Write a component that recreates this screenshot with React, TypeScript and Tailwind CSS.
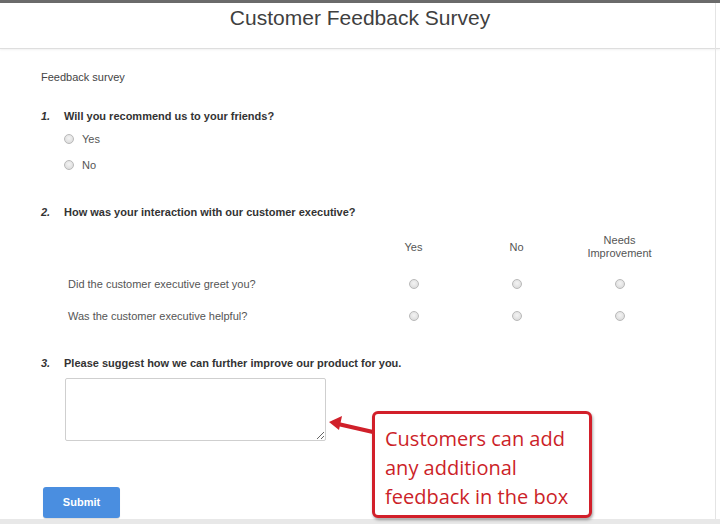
import React from "react";

const Radio = () => (
  <span className="inline-block w-[10px] h-[10px] rounded-full border border-[#b9b9b9] bg-[radial-gradient(circle_at_50%_40%,#f4f4f4,#d6d6d6)]" />
);

const rows = ["Did the customer executive greet you?", "Was the customer executive helpful?"];

export default function App() {
  return (
    <div className="relative w-[720px] h-[524px] overflow-hidden bg-white text-[11px] text-[#444] font-['Liberation_Sans',Arial,sans-serif]">
      <div className="h-[3px] bg-[#6b6b6b]" />
      <div className="h-[46px] border-b border-[#dedede] shadow-[0_1px_2px_rgba(0,0,0,0.06)] flex justify-center pt-[2px]">
        <h1 className="text-[21px] leading-[26px] text-[#3f3f3f]">Customer Feedback Survey</h1>
      </div>

      <div className="absolute top-[3px] right-[4px] bottom-0 w-px bg-[#e4e4e4]" />

      <div className="pl-[41px] pt-[21px]">
        <p className="leading-[14px] text-[#444]">Feedback survey</p>

        {/* question 1 */}
        <div className="mt-[25px] flex font-bold text-[#333] leading-[14px]">
          <span className="w-[23px] italic">1.</span>
          <span>Will you recommend us to your friends?</span>
        </div>
        <div className="ml-[23px] mt-[9px] flex flex-col gap-[12px] text-[#555]">
          {["Yes", "No"].map(o => (
            <label key={o} className="flex items-center gap-[8px] leading-[14px]">
              <Radio />
              {o}
            </label>
          ))}
        </div>

        {/* question 2 */}
        <div className="mt-[33px] flex font-bold text-[#333] leading-[14px]">
          <span className="w-[23px] italic">2.</span>
          <span>How was your interaction with our customer executive?</span>
        </div>
        <div className="ml-[27px] mt-[10px] grid grid-cols-[294px_103px_103px_103px] text-[#555]">
          <div className="h-[39px]" />
          <div className="h-[39px] pb-[3px] flex items-center justify-center">Yes</div>
          <div className="h-[39px] pb-[3px] flex items-center justify-center">No</div>
          <div className="h-[39px] pb-[3px] flex items-center justify-center text-center leading-[13px]">
            Needs
            <br />
            Improvement
          </div>
          {rows.map(r => (
            <React.Fragment key={r}>
              <div className="h-[32px] flex items-center">{r}</div>
              <div className="flex items-center justify-center"><Radio /></div>
              <div className="flex items-center justify-center"><Radio /></div>
              <div className="flex items-center justify-center"><Radio /></div>
            </React.Fragment>
          ))}
        </div>

        {/* question 3 */}
        <div className="mt-[24px] flex font-bold text-[#333] leading-[14px]">
          <span className="w-[23px] italic">3.</span>
          <span>Please suggest how we can further improve our product for you.</span>
        </div>
        <textarea className="block ml-[24px] mt-[8px] w-[261px] h-[63px] border border-[#cfcfcf] rounded-[2px] resize" />

        <button className="mt-[46px] ml-[2px] w-[77px] h-[31px] rounded-[3px] bg-[#4a8ee0] text-white font-bold text-[11px] shadow-[0_1px_1px_rgba(0,0,0,0.15)]">
          Submit
        </button>
      </div>

      <div className="absolute left-0 right-0 bottom-0 h-[5px] bg-[#e8e8e8]" />

      {/* annotation */}
      <svg className="absolute left-[326px] top-[412px]" width="50" height="30" viewBox="0 0 50 30">
        <line x1="47" y1="20" x2="12" y2="12" stroke="#d0202a" strokeWidth="4" strokeLinecap="round" />
        <polygon points="3,10 16,4 13,18" fill="#d0202a" />
      </svg>
      <div className="absolute left-[372px] top-[411px] w-[220px] h-[107px] border-[3px] border-[#d21f2a] rounded-[6px] bg-white shadow-[1px_2px_3px_rgba(0,0,0,0.35)] pl-[10px] pt-[10px] text-[#cc1f29] text-[20px] leading-[29px] font-['Open_Sans',sans-serif]">
        Customers can add
        <br />
        any additional
        <br />
        feedback in the box
      </div>
    </div>
  );
}
